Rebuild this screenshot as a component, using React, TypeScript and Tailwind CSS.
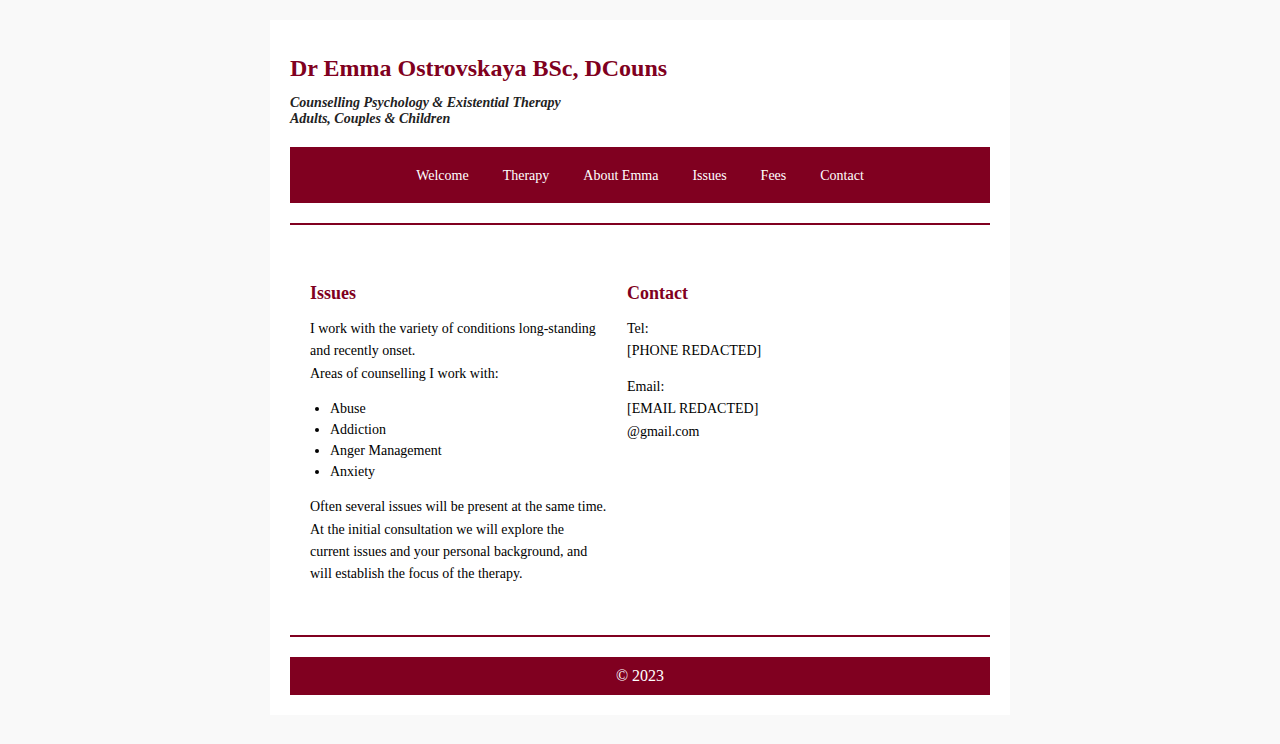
import React from 'react';

const navLinks = ['Welcome', 'Therapy', 'About Emma', 'Issues', 'Fees', 'Contact'];
const areas = ['Abuse', 'Addiction', 'Anger Management', 'Anxiety'];

const App: React.FC = () => {
  return (
    <div className="min-h-screen bg-[#f9f9f9] pt-5 pb-[29px] font-['Liberation_Serif','Times_New_Roman',serif] text-black">
      <div className="mx-auto w-[740px] bg-white p-5">
        <header className="pt-[14px]">
          <h1 className="text-[24px] font-bold leading-[28px] text-[#800020]">Dr Emma Ostrovskaya BSc, DCouns</h1>
          <p className="mt-[13px] text-[14px] font-bold italic leading-[16px] text-[#222]">
            Counselling Psychology &amp; Existential Therapy
            <br />
            Adults, Couples &amp; Children
          </p>
        </header>

        <nav className="mt-[20px] flex h-[56px] items-center justify-center bg-[#800020]">
          {navLinks.map(link => (
            <a key={link} href="#" className="px-[17px] text-[14px] text-white">
              {link}
            </a>
          ))}
        </nav>

        <hr className="mt-5 border-0 border-t-2 border-[#800020]" />

        <main className="grid grid-cols-[297px_1fr] gap-[20px] px-5 pt-[58px] pb-[49px]">
          <section>
            <h2 className="text-[18px] font-bold leading-[21px] text-[#800020]">Issues</h2>
            <p className="mt-[14px] text-[14px] leading-[22.4px]">
              I work with the variety of conditions long-standing and recently onset.
              <br />
              Areas of counselling I work with:
            </p>
            <ul className="mt-[13px] list-disc pl-5 text-[14px] leading-[21px]">
              {areas.map(a => (
                <li key={a}>{a}</li>
              ))}
            </ul>
            <p className="mt-[14px] text-[14px] leading-[22.4px]">
              Often several issues will be present at the same time. At the initial consultation we will explore the
              current issues and your personal background, and will establish the focus of the therapy.
            </p>
          </section>
          <section>
            <h2 className="text-[18px] font-bold leading-[21px] text-[#800020]">Contact</h2>
            <p className="mt-[14px] text-[14px] leading-[22.4px]">
              Tel:
              <br />
              [PHONE REDACTED]
            </p>
            <p className="mt-[13px] w-[160px] text-[14px] leading-[22.4px]">
              Email:
              <br />
              [EMAIL REDACTED]
              <br />
              @gmail.com
            </p>
          </section>
        </main>

        <hr className="border-0 border-t-2 border-[#800020]" />

        <footer className="mt-5 flex h-[38px] items-center justify-center bg-[#800020] text-[16px] text-white">
          © 2023
        </footer>
      </div>
    </div>
  );
};

export default App;
